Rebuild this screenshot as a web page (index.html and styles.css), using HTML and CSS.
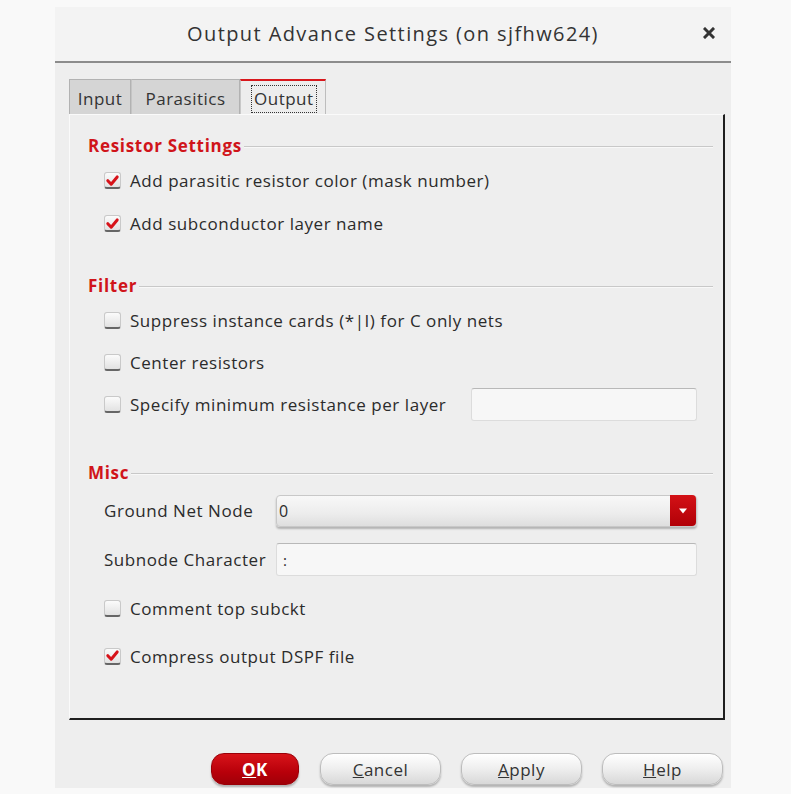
FILE: index.html
```html
<!DOCTYPE html>
<html>
<head>
<meta charset="utf-8">
<link rel="stylesheet" href="styles.css">
</head>
<body>
<div class="dialog">
  <div class="titlebar">
    <span class="title">Output Advance Settings (on sjfhw624)</span>
    <span class="close"><svg viewBox="0 0 12 12"><path d="M2 2 L10 10 M10 2 L2 10"/></svg></span>
  </div>
  <div class="tabs">
    <div class="tab t-input">Input</div>
    <div class="tab t-para">Parasitics</div>
    <div class="tab active"><span class="focus">Output</span></div>
  </div>
  <div class="panel">
    <div class="section s1">
      <div class="header"><span>Resistor Settings</span><i></i></div>
      <div class="row"><span class="cb checked"><svg viewBox="0 0 16 16"><path d="M3 8.2 L6.6 12 L13 4.2" /></svg></span>Add parasitic resistor color (mask number)</div>
      <div class="row"><span class="cb checked"><svg viewBox="0 0 16 16"><path d="M3 8.2 L6.6 12 L13 4.2" /></svg></span>Add subconductor layer name</div>
    </div>
    <div class="section s2">
      <div class="header"><span>Filter</span><i></i></div>
      <div class="row"><span class="cb"></span>Suppress instance cards (*|I) for C only nets</div>
      <div class="row"><span class="cb"></span>Center resistors</div>
      <div class="row"><span class="cb"></span><span class="grow">Specify minimum resistance per layer</span><span class="field wide"></span></div>
    </div>
    <div class="section s3">
      <div class="header"><span>Misc</span><i></i></div>
      <div class="row form"><span class="label">Ground Net Node</span><span class="combo"><span class="val">0</span><span class="arrow"><svg viewBox="0 0 10 6"><path d="M1 0.5 H9 L5 5.5 Z"/></svg></span></span></div>
      <div class="row form"><span class="label">Subnode Character</span><span class="field fill">:</span></div>
      <div class="row tall"><span class="cb"></span>Comment top subckt</div>
      <div class="row tall"><span class="cb checked"><svg viewBox="0 0 16 16"><path d="M3 8.2 L6.6 12 L13 4.2" /></svg></span>Compress output DSPF file</div>
    </div>
  </div>
  <div class="buttons">
    <button class="btn ok"><u>O</u>K</button>
    <button class="btn"><u>C</u>ancel</button>
    <button class="btn"><u>A</u>pply</button>
    <button class="btn"><u>H</u>elp</button>
  </div>
</div>
</body>
</html>
```

FILE: styles.css
```css
* { box-sizing: border-box; }
html, body { margin: 0; padding: 0; }
body {
  background: #f9f9f9;
  font-family: "Open Sans", "Noto Sans", sans-serif;
  color: #2a2a2a;
  width: 791px;
  height: 794px;
  overflow: hidden;
}
.dialog {
  margin: 7px 0 0 55px;
  width: 676px;
  height: 781px;
  background: #eeeeee;
  display: flex;
  flex-direction: column;
}
.titlebar {
  height: 56px;
  border-bottom: 2px solid #8c8c8c;
  display: flex;
  align-items: center;
  justify-content: center;
  position: relative;
  background: #f3f3f3;
}
.title {
  font-size: 20px;
  color: #333;
  letter-spacing: 1.4px;
  margin-top: -2px;
}
.close {
  position: absolute;
  right: 16px;
  top: 20px;
  width: 12px;
  height: 12px;
  display: flex;
}
.close svg { width: 12px; height: 12px; }
.close path { stroke: #333; stroke-width: 3; stroke-linecap: square; fill: none; }
.tabs {
  display: flex;
  margin: 16px 0 0 14px;
  height: 35px;
  align-items: flex-end;
}
.tab {
  height: 35px;
  padding: 3px 8px 0 9px;
  background: #d5d5d5;
  border: 1px solid #b2b2b2;
  border-bottom: none;
  font-size: 17px;
  letter-spacing: 0.5px;
  line-height: 32px;
  color: #333;
}
.t-input { width: 62px; text-align: center; padding: 3px 0 0 0; }
.t-para { width: 109px; text-align: center; padding: 3px 0 0 0; }
.tab + .tab { border-left: 1px solid #c4c4c4; }
.tab.active {
  width: 86px;
  background: #ededed;
  border-top: 2px solid #d8171c;
  border-left: 1px solid #c8c8c8;
  border-right: 1px solid #bdbdbd;
  padding: 4px 0 0 10px;
  line-height: 26px;
}
.focus {
  border: 1px dotted #333;
  padding: 0 2px 0 2px;
  line-height: 26px;
  display: inline-block;
}
.panel {
  margin-left: 14px;
  width: 656px;
  height: 606px;
  border-top: 1px solid #fafafa;
  border-left: 1px solid #fafafa;
  border-right: 2px solid #1e1e1e;
  border-bottom: 2px solid #1e1e1e;
  background: #eeeeee;
  padding: 18px 10px 0 18px;
}
.section { display: flex; flex-direction: column; }
.s2 { margin-top: 28px; }
.s3 { margin-top: 35px; }
.header {
  display: flex;
  align-items: center;
  height: 24px;
  margin-bottom: 2px;
}
.header span {
  color: #d0141a;
  font-weight: bold;
  font-size: 17px;
  letter-spacing: 0.7px;
}
.header i {
  flex: 1;
  height: 2px;
  background: #c8c8c8;
  border-bottom: 1px solid #f8f8f8;
  margin-left: 2px;
  margin-top: 3px;
}
.row {
  display: flex;
  align-items: center;
  height: 43px;
  padding-left: 16px;
  font-size: 17px;
  color: #2b2b2b;
  letter-spacing: 0.55px;
}
.s2 .row { height: 42px; }
.row.tall { height: 48px; }
.cb {
  width: 17px;
  height: 17px;
  border-radius: 3px;
  background: linear-gradient(#fbfbfb, #e2e2e2);
  border: 1px solid #c9c9c9;
  border-bottom: 2px solid #666;
  margin-right: 9px;
  flex: none;
  display: flex;
  align-items: center;
  justify-content: center;
}
.cb svg { width: 15px; height: 15px; }
.cb path { fill: none; stroke: #d7131a; stroke-width: 3.2; stroke-linecap: round; stroke-linejoin: round; }
.grow { width: 341px; }
.field {
  height: 33px;
  background: #f7f7f7;
  border: 1px solid #dcdcdc;
  border-top: 1px solid #b8b8b8;
  border-radius: 3px;
  display: flex;
  align-items: center;
  font-size: 15px;
  padding-left: 6px;
}
.field.wide { width: 226px; }
.field.fill { width: 421px; }
.row.form { height: 49px; }
.label { width: 172px; }
.combo {
  width: 421px;
  height: 32px;
  border-radius: 4px;
  background: linear-gradient(#f8f8f8, #ececec 60%, #dedede);
  border: 1px solid #c8c8c8;
  box-shadow: 0 2px 2px rgba(0,0,0,0.25);
  display: flex;
  align-items: center;
}
.val { flex: 1; padding-left: 2px; font-size: 16px; }
.arrow {
  width: 26px;
  height: 31px;
  background: linear-gradient(#d31116, #b10007);
  border-radius: 0 4px 4px 0;
  display: flex;
  align-items: center;
  justify-content: center;
}
.arrow svg { width: 10px; height: 6px; }
.arrow path { fill: #fff; }
.buttons {
  display: flex;
  justify-content: flex-end;
  gap: 20px;
  padding-right: 8px;
  margin-top: 33px;
}
.btn {
  height: 32px;
  width: 121px;
  border-radius: 13px;
  border: 1px solid #bdbdbd;
  background: linear-gradient(#ffffff, #eeeeee 50%, #d8d8d8);
  box-shadow: 0 2px 2px rgba(0,0,0,0.25);
  font-family: "Open Sans", "Noto Sans", sans-serif;
  font-size: 17px;
  letter-spacing: 0.5px;
  color: #333;
  padding: 0;
}
.btn.ok {
  width: 88px;
  background: linear-gradient(#d8141a, #b8000a 60%, #a00008);
  border: 1px solid #9a0008;
  color: #fff;
  font-weight: bold;
  margin-right: 1px;
}
```
